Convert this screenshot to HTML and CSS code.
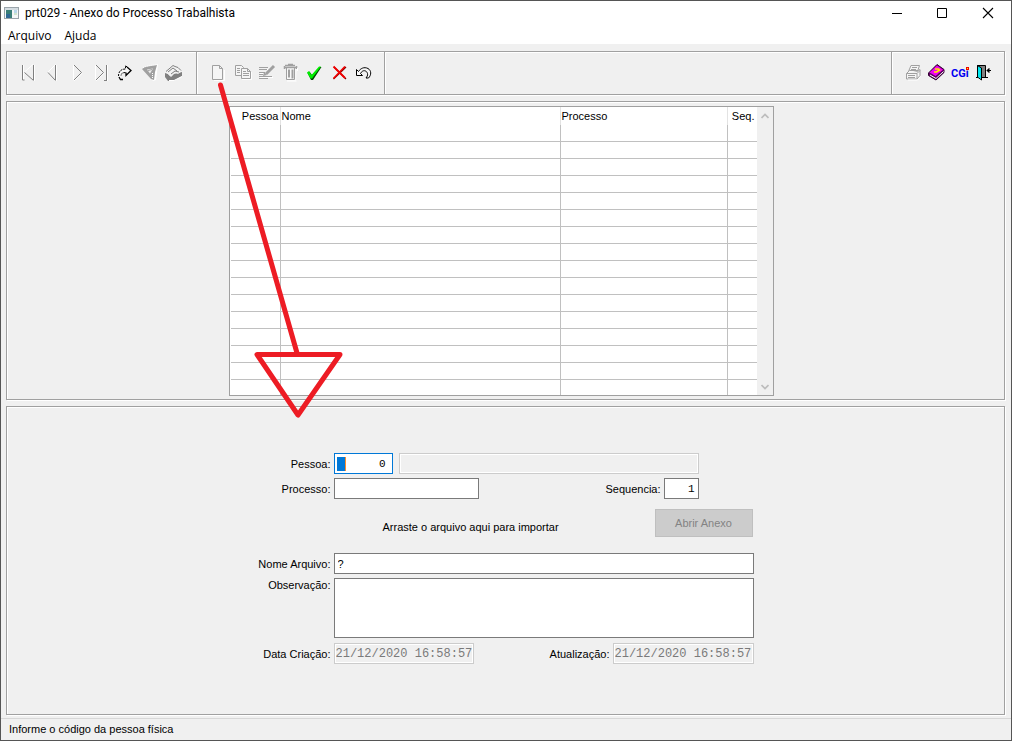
FILE: index.html
```
<!DOCTYPE html>
<html lang="pt-BR">
<head>
<meta charset="utf-8">
<title>prt029 - Anexo do Processo Trabalhista</title>
<link rel="stylesheet" href="styles.css">
</head>
<body>
<div class="window">
  <header class="titlebar">
    <svg class="app-icon" width="16" height="16" viewBox="0 0 16 16" shape-rendering="crispEdges">
      <rect x=".5" y="2.5" width="14" height="11" fill="#f4f7f8" stroke="#9aa4aa"/>
      <rect x="1" y="3" width="13" height="2" fill="#d5dde2"/>
      <rect x="2" y="5" width="6" height="8" fill="#3a7f78"/><rect x="2" y="9" width="4" height="4" fill="#2f6a94"/>
      <rect x="10" y="5" width="3" height="3" fill="#b9d7ea"/><rect x="10" y="8" width="3" height="2" fill="#cfe6cf"/>
    </svg>
    <h1 class="title">prt029 - Anexo do Processo Trabalhista</h1>
    <div class="window-controls">
      <button class="win-btn" aria-label="Minimizar"><svg width="12" height="12" viewBox="0 0 12 12"><path d="M1 6.500h10" stroke="#000"/></svg></button>
      <button class="win-btn" aria-label="Maximizar"><svg width="12" height="12" viewBox="0 0 12 12"><path d="M1.500 1.500h9v9h-9z" fill="none" stroke="#000"/></svg></button>
      <button class="win-btn" aria-label="Fechar"><svg width="12" height="12" viewBox="0 0 12 12"><path d="M1 1l10 10M11 1L1 11" stroke="#000" stroke-width="1.100"/></svg></button>
    </div>
  </header>
  <nav class="menubar">
    <button class="menu-item">Arquivo</button>
    <button class="menu-item">Ajuda</button>
  </nav>

  <main class="content">
    <div class="toolbar" role="toolbar">
      <div class="group">
        <button class="tool" aria-label="Primeiro"><svg viewBox="0 0 24 24"><g class="lite"><path d="M7.500 5v15M18.500 5v16M8.500 12L17 4.500"/></g><g class="gray"><path d="M6.500 5v15h2M17.500 5v15M8.500 12.500l9 8"/></g></svg></button>
        <button class="tool" aria-label="Anterior"><svg viewBox="0 0 24 24"><g class="lite"><path d="M7.500 12.500l8-8M16.500 5v16"/></g><g class="gray"><path d="M15.500 5v15M8 12.500l7.500 8"/></g></svg></button>
        <button class="tool" aria-label="Próximo"><svg viewBox="0 0 24 24"><g class="lite"><path d="M9.500 5v15M10 21l8.500-8"/></g><g class="gray"><path d="M10 5l7.500 7.500-7.500 7.500"/></g></svg></button>
        <button class="tool" aria-label="Último"><svg viewBox="0 0 24 24"><g class="lite"><path d="M7.500 5v15M8 21l8.500-8M19.500 5v16"/></g><g class="gray"><path d="M8 5l7.500 7.500L8 20M16 20.500h3M18.500 5v15"/></g></svg></button>
        <button class="tool" aria-label="Ir para"><svg viewBox="0 0 24 24"><path d="M8.500 19.500C6 17 5.500 13 7.500 11S12 9 13.500 9V5.500l5.500 5-5.500 5V12.500c-3 0-4.500 1-4.500 3s1 2.500 1 4z" fill="#f8f8f8"/><path d="M6.500 16c0-4 2-7 7-7V5.500l2 2M13.500 12.500c-3 0-4.500 1-4.500 3.500" fill="none" stroke="#000" stroke-dasharray="2 1"/><path d="M15 7l4 3.500-5 5v-3M7 17l1.500 2.500H11" fill="none" stroke="#000" stroke-width="1.300"/></svg></button>
        <button class="tool" aria-label="Filtro"><svg viewBox="0 0 24 24"><path d="M8 10l14-6-2 16-3 1z" fill="#fff"/><path d="M6 9l3-2 12-2-2 7-1 8-3-1z" fill="#a0a0a0"/><path d="M11 9.500l6-1-3 5z" fill="#eee"/><path d="M12 10.500l4-1M16.500 12v6" stroke="#a0a0a0"/><path d="M16.500 13v5M7 7.500l6-2 8-1" fill="none" stroke="#fff" stroke-dasharray="1 1"/></svg></button>
        <button class="tool" aria-label="Localizar"><svg viewBox="0 0 24 24"><path d="M5 13l3 1 3 3 3-3 8-2v4l-9 5H8l-3-4z" fill="#808080"/><path d="M5 12l8-7 9 6-4 3-4-2-4 4-2-2z" fill="#f2f2f2"/><path d="M6 11.500l7-6 2 1 3 1 3 3M8 12l5-4 4 3M11 14l4-3 4 1" fill="none" stroke="#808080"/><path d="M9 20.500h5l8-4" fill="none" stroke="#fff"/></svg></button>
      </div>
      <div class="group">
        <button class="tool" aria-label="Novo"><svg viewBox="0 0 24 24"><path d="M9 20.500h10.500V10" fill="none" stroke="#fff"/><path d="M7.500 5.500h7l3 3v11h-10zM14.500 5.500v3h3" fill="#f5f5f5" stroke="#a0a0a0"/></svg></button>
        <button class="tool" aria-label="Copiar"><svg viewBox="0 0 24 24"><g fill="#f5f5f5" stroke="#a0a0a0"><path d="M6.500 5.500h6l2 2v8h-8z"/><path d="M12.500 8.500h6l3 3v7h-9zM18.500 8.500v3h3"/><path d="M8 8.500h3M8 10.500h3M8 12.500h3M14 11.500h3M14 13.500h6M14 15.500h6"/></g><path d="M13 19.500h9.500V12" fill="none" stroke="#fff"/></svg></button>
        <button class="tool" aria-label="Editar"><svg viewBox="0 0 24 24"><path d="M7 9.500h8M7 13.500h4M7 17.500h13" stroke="#fff"/><g stroke="#a0a0a0"><path d="M6 7.500h9M6 9.500h8M6 12.500h6M6 14.500h4M6 16.500h13M6 18.500h9"/><path d="M21 6l-8 8" stroke-width="3"/></g><path d="M10 16l1-4 3 3z" fill="#a0a0a0"/></svg></button>
        <button class="tool" aria-label="Excluir"><svg viewBox="0 0 24 24"><path d="M9 8h11l-1 13H10z" fill="#f8f8f8"/><g stroke="#a0a0a0" fill="none"><path d="M7 7.500h12M8 5.500h10M11 4.500h5M19.500 6v3M7.500 6v3" stroke-width="1.500"/><path d="M9.500 8v11.500h8V8"/><path d="M12 9.500v8M15.500 9.500v9" stroke-width="2"/></g><path d="M10 21h9.500M20.500 8v3" fill="none" stroke="#fff"/></svg></button>
        <button class="tool" aria-label="Confirmar"><svg viewBox="0 0 24 24"><path d="M6.500 13l2-1.500L11 15l8-8h1.500L12 20h-2z" fill="#004800"/><path d="M6 12.500L8 11l2.500 4L18 6.500h2L11 18.500H9.500z" fill="#00f000"/></svg></button>
        <button class="tool" aria-label="Cancelar"><svg viewBox="0 0 24 24"><path d="M9 7l12 12M21 7L8.500 19" stroke="#700" stroke-width="1.300"/><path d="M8.500 6.500l11.500 11.500M20 6.500L8.500 18.500" stroke="#f00000" stroke-width="1.800"/></svg></button>
        <button class="tool" aria-label="Desfazer"><svg viewBox="0 0 24 24"><path d="M7.500 9.500v6h6l-2-2c2-4 6-3.500 7 0 .5 2-.5 3-1.500 4.500h2.500c3-3 3-7.500-.5-9.500-4-2-7.500 0-9.500 3z" fill="#f8f8f8" stroke="#000"/></svg></button>
      </div>
      <div class="group spacer"></div>
      <div class="group">
        <button class="tool" aria-label="Imprimir"><svg viewBox="0 0 24 24"><g fill="#f5f5f5" stroke="#a0a0a0"><path d="M7.500 11.500L10 5.500h8.500l-2 6z"/><path d="M11 7.500h5M10 9.500h5"/><path d="M5.500 13.500l3-3h9l1.500-1v6l-3 3.500H5.500zM5.500 13.500H16l3-3M16 13.500v5"/><path d="M7 15.500h7M7 17.500h7"/></g><path d="M7 20h9.500l3-3.500" fill="none" stroke="#fff"/></svg></button>
        <button class="tool" aria-label="Manual"><svg viewBox="0 0 24 24"><path d="M3.500 13L12 4.500l7 5v3L11 20l-7.500-4.500z" fill="#600060" stroke="#300030"/><path d="M4.500 12.500L12 5.500l6.500 4.500-8 6z" fill="#f000f0"/><path d="M13 14l5-4v2l-6 6z" fill="#500050"/><path d="M5 15l6 3.500 7.500-7" fill="none" stroke="#fff"/><path d="M10 9h3.500l1 1-3 2H9" fill="none" stroke="#ffe800" stroke-width="1.700"/></svg></button>
        <button class="tool" aria-label="CGI"><svg viewBox="0 0 24 24"><text class="cgi" x="2" y="17">CGi</text><path d="M17 7h3v3h-3z" fill="#f00000"/><path d="M18 8h1v1h-1z" fill="#ff0"/></svg></button>
        <button class="tool" aria-label="Sair"><svg viewBox="0 0 24 24"><path d="M4.500 17V5.500h8V17" fill="#808080" stroke="#000"/><path d="M5 6l4 2.500V20l-4-3z" fill="#00e8f0"/><path d="M4.500 5.500L8.500 8v12l-4-3zM3 17.500h2M9 17.500h6" fill="none" stroke="#000"/><path d="M14 10.500h4M16 8.500l-2 2 2 2z" fill="#000" stroke="#000"/></svg></button>
      </div>
    </div>

    <section class="panel list-panel">
      <div class="list">
        <table class="grid">
          <colgroup><col class="c-person"><col class="c-name"><col class="c-process"><col class="c-seq"></colgroup>
          <thead><tr><th class="num">Pessoa</th><th>Nome</th><th>Processo</th><th class="num seq">Seq.</th></tr></thead>
          <tbody>
            <tr><td></td><td></td><td></td><td></td></tr>
            <tr><td></td><td></td><td></td><td></td></tr>
            <tr><td></td><td></td><td></td><td></td></tr>
            <tr><td></td><td></td><td></td><td></td></tr>
            <tr><td></td><td></td><td></td><td></td></tr>
            <tr><td></td><td></td><td></td><td></td></tr>
            <tr><td></td><td></td><td></td><td></td></tr>
            <tr><td></td><td></td><td></td><td></td></tr>
            <tr><td></td><td></td><td></td><td></td></tr>
            <tr><td></td><td></td><td></td><td></td></tr>
            <tr><td></td><td></td><td></td><td></td></tr>
            <tr><td></td><td></td><td></td><td></td></tr>
            <tr><td></td><td></td><td></td><td></td></tr>
            <tr><td></td><td></td><td></td><td></td></tr>
            <tr><td></td><td></td><td></td><td></td></tr>
            <tr><td></td><td></td><td></td><td></td></tr>
          </tbody>
        </table>
        <div class="scrollbar">
          <button class="scroll-btn" aria-label="Rolar para cima"><svg width="8" height="6" viewBox="0 0 8 6"><path d="M.5 5L4 1.500 7.500 5" fill="none" stroke="#bdbdbd" stroke-width="1.700"/></svg></button>
          <button class="scroll-btn" aria-label="Rolar para baixo"><svg width="8" height="6" viewBox="0 0 8 6"><path d="M.5 1L4 4.500 7.500 1" fill="none" stroke="#bdbdbd" stroke-width="1.700"/></svg></button>
        </div>
      </div>
    </section>

    <section class="panel form-panel">
      <form class="form">
        <div class="row">
          <label class="label" for="pessoa">Pessoa:</label>
          <div class="person-box"><span class="caret"></span><input class="person-input" id="pessoa" value="0"></div>
          <input class="field readonly person-name" aria-label="Nome da pessoa" readonly>
        </div>
        <div class="row">
          <label class="label" for="processo">Processo:</label>
          <input class="field process" id="processo">
          <label class="label seq-label" for="sequencia">Sequencia:</label>
          <input class="field number" id="sequencia" value="1">
        </div>
        <div class="row attach-row">
          <p class="hint">Arraste o arquivo aqui para importar</p>
          <button class="attach" type="button" disabled>Abrir Anexo</button>
        </div>
        <div class="row">
          <label class="label" for="arquivo">Nome Arquivo:</label>
          <input class="field wide" id="arquivo" value="?">
        </div>
        <div class="row top">
          <label class="label" for="obs">Observação:</label>
          <textarea class="field wide notes" id="obs"></textarea>
        </div>
        <div class="row">
          <label class="label" for="criacao">Data Criação:</label>
          <input class="field readonly date" id="criacao" value="21/12/2020 16:58:57" readonly>
          <label class="label update-label" for="atualizacao">Atualização:</label>
          <input class="field readonly date update" id="atualizacao" value="21/12/2020 16:58:57" readonly>
        </div>
      </form>
    </section>
  </main>
  <footer class="status">Informe o código da pessoa física</footer>

  <svg class="arrow" width="350" height="430" viewBox="0 0 350 430"><path d="M220.500 85L297 353M257 354.500H340L298 415z" fill="none" stroke="#ed1c24" stroke-width="5" stroke-linecap="round" stroke-linejoin="round"/></svg>
</div>
</body>
</html>
```
FILE: styles.css
```
* { box-sizing: border-box; }
body { margin: 0; background: #f0f0f0; color: #000; font: 11px/14px "Liberation Sans", Arial, sans-serif; }
button, input, textarea { font: inherit; color: inherit; margin: 0; padding: 0; border: 0; border-radius: 0; background: none; }
.window { position: relative; display: flex; flex-direction: column; min-height: 100vh; border: 1px solid #555; }

.titlebar { display: flex; align-items: center; height: 24px; padding-left: 3px; background: #fff; font: 12px/16px Roboto, "Open Sans", sans-serif; }
.title { flex: 1; margin: 0 0 0 5px; font: inherit; }
.window-controls { display: flex; }
.win-btn { display: flex; align-items: center; justify-content: center; width: 46px; height: 24px; }
.win-btn:first-child { padding-left: 1px; }
.menubar { display: flex; height: 19px; background: #fff; font: 12px/16px "Open Sans", "Noto Sans", sans-serif; padding: 3px 0 0 7px; gap: 13px; align-items: center; }

.content { flex: 1; display: flex; flex-direction: column; gap: 6px; padding: 7px 6px 3px 5px; }
.toolbar { display: flex; border: 1px solid #a0a0a0; box-shadow: 1px 1px #fff; height: 44px; }
.group { display: flex; align-items: center; padding: 0 11px 2px 9px; border-right: 1px solid #a0a0a0; box-shadow: inset 1px 1px #fff; }
.group:nth-child(2) { padding: 0 11px 2px 8px; }
.group:first-child { padding-right: 12px; }
.group:last-child { padding-right: 7px; border-right: 0; }
.spacer { flex: 1; }
.tool { width: 24px; height: 24px; }
.tool svg { display: block; width: 24px; height: 24px; }
.lite { fill: none; stroke: #fff; }
.gray { fill: none; stroke: #808080; }
.cgi { font: bold 11px Roboto, sans-serif; fill: #0000f0; }

.panel { border: 1px solid #a0a0a0; box-shadow: 1px 1px #fff, inset 1px 1px #fff; padding-right: 9px; }
.list-panel { padding-top: 4px; padding-bottom: 3px; }
.list { display: flex; width: 545px; margin: 0 auto; padding-left: 1px; border: 1px solid #a0a0a0; background: #fff; }
.grid { flex: 1; table-layout: fixed; border-collapse: separate; border-spacing: 0; }
.c-person { width: 50px; }
.c-name { width: 280px; }
.c-process { width: 167px; }
.c-seq { width: 29px; }
.grid th { height: 18px; padding: 0 1px; font-weight: normal; text-align: left; border-right: 1px solid #e3e3e3; }
.grid .num { text-align: right; }
.grid .seq { padding-right: 2px; }
.grid td { height: 17px; padding: 0; border-right: 1px solid #c0c0c0; border-bottom: 1px solid #c0c0c0; }
.grid th:last-child, .grid td:last-child { border-right: 0; }
.grid tr:last-child td { height: 15px; border-bottom: 0; }
.scrollbar { display: flex; flex-direction: column; justify-content: space-between; width: 16px; background: #f0f0f0; }
.scroll-btn { display: flex; align-items: center; justify-content: center; height: 17px; }

.form-panel { flex: 1; padding-top: 46px; }
.form { display: flex; flex-direction: column; gap: 4px; width: 545px; margin: 0 auto; }
.row { display: flex; align-items: center; }
.top { align-items: flex-start; }
.label { width: 102px; margin-right: 3px; text-align: right; white-space: nowrap; }
.field { height: 21px; padding: 0 3px; border: 1px solid #7a7a7a; background: #fff; }
.readonly { border-color: #ccc; background: #f0f0f0; box-shadow: inset 0 0 0 1px #fff; }
.person-box { display: flex; align-items: center; width: 59px; height: 21px; padding: 0 6px 0 2px; border: 1px solid #0078d7; background: #fff; }
.caret { width: 9px; height: 14px; background: #0078d7; border-right: 1px solid #ff8c28; }
.person-input { flex: 1; min-width: 0; text-align: right; outline: 0; font-family: "Liberation Mono", monospace; }
.person-name { width: 300px; margin-left: 6px; }
.process { width: 145px; }
.seq-label { width: 182px; }
.number { width: 35px; text-align: right; font-family: "Liberation Mono", monospace; }
.attach-row { padding: 6px 0 12px 154px; }
.hint { margin: 8px 0 0; width: 272px; }
.attach { width: 98px; height: 28px; border: 1px solid #bfbfbf; background: #ccc; color: #838383; }
.wide { width: 420px; }
.notes { display: block; height: 60px; resize: none; margin-bottom: 1px; }
.date { width: 140px; padding: 0 1px; color: #7a7a7a; font: 12px/14px "Liberation Mono", monospace; }
.update-label { width: 136px; }
.update { width: 141px; }

.status { height: 22px; padding: 3px 8px; border-top: 1px solid #d7d7d7; }
.arrow { position: absolute; left: -1px; top: -1px; pointer-events: none; }
```
